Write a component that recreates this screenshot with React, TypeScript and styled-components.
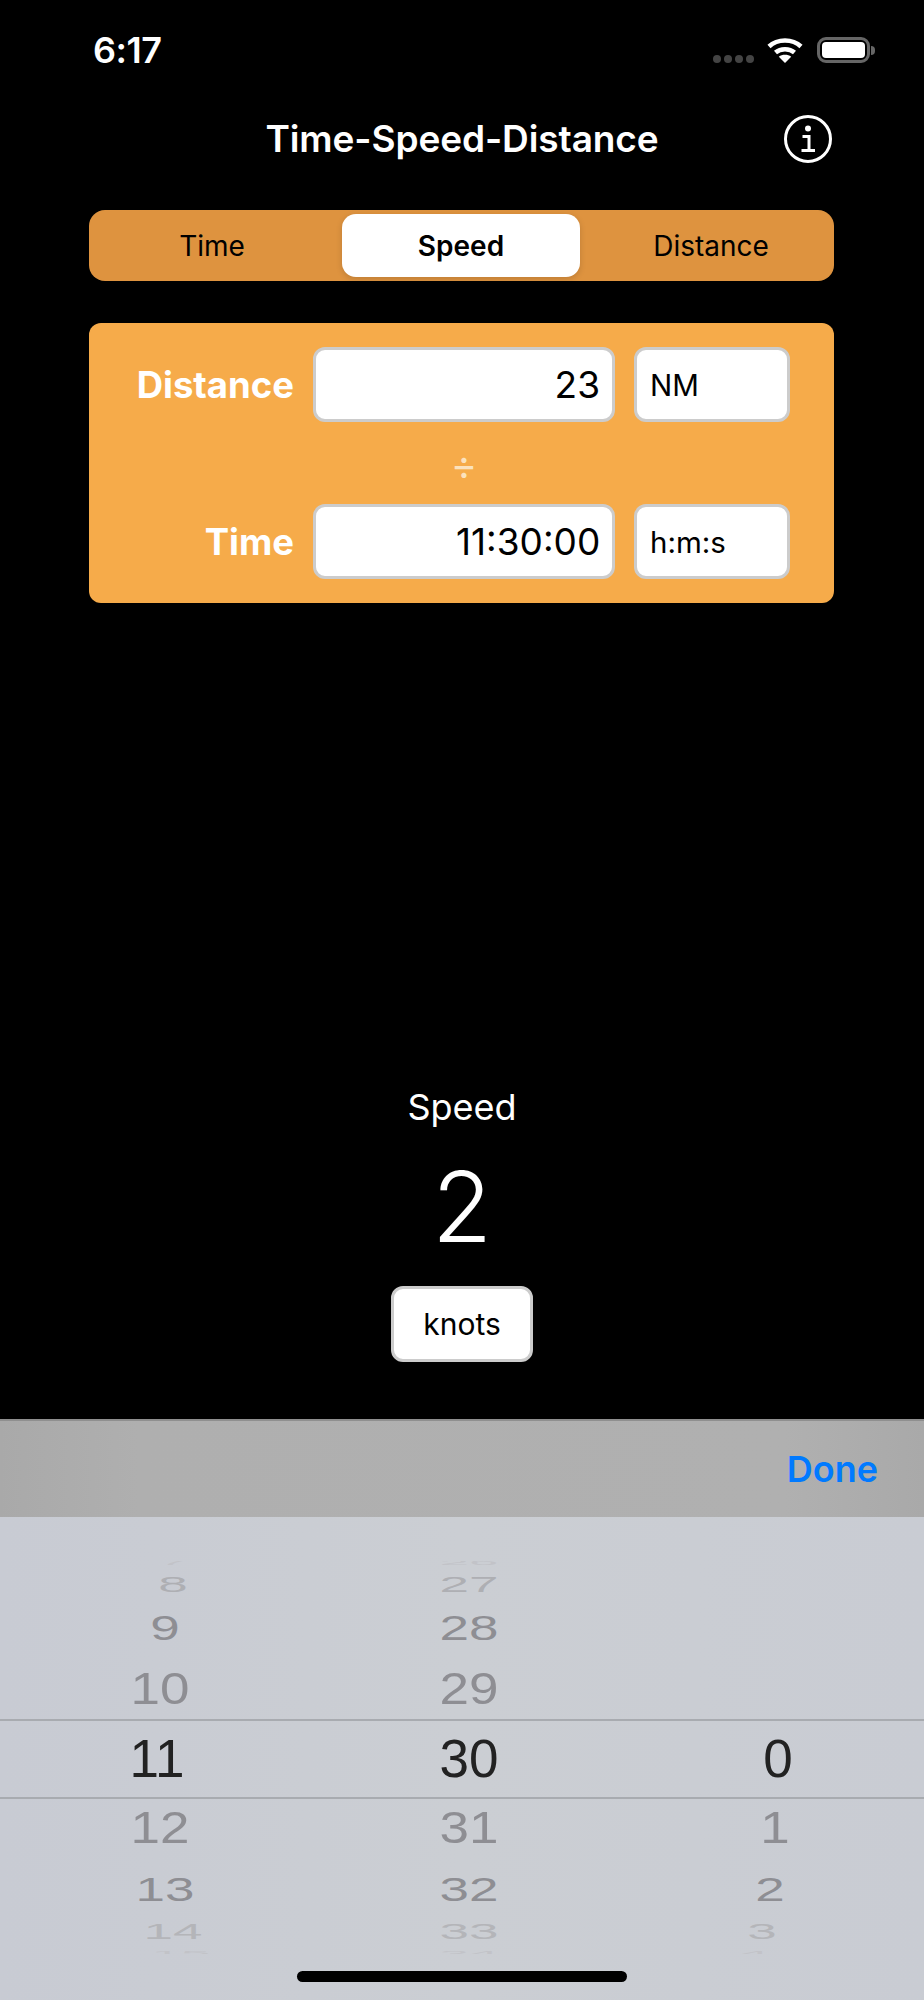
import React from 'react';
import styled, { createGlobalStyle } from 'styled-components';

const GlobalStyle = createGlobalStyle`
  body {
    margin: 0;
    background: #000;
    font-family: Inter, "Liberation Sans", sans-serif;
  }
`;

interface IWheelRow {
  height: number;
  scale: number;
  shift: number;
  color: string;
}

const wheelRows: IWheelRow[] = [
  { height: 20, scale: 0.13, shift: 16, color: '#c2c3c8' },
  { height: 24, scale: 0.4, shift: 16, color: '#aeafb3' },
  { height: 62, scale: 0.66, shift: 8, color: '#8e8e93' },
  { height: 60, scale: 0.84, shift: 3, color: '#8e8e93' },
  { height: 80, scale: 1, shift: 0, color: '#222' },
  { height: 58, scale: 0.84, shift: 3, color: '#8e8e93' },
  { height: 64, scale: 0.64, shift: 8, color: '#8e8e93' },
  { height: 22, scale: 0.4, shift: 16, color: '#b4b5b9' },
  { height: 20, scale: 0.14, shift: 24, color: '#c2c3c8' },
];

const hours = ['7', '8', '9', '10', '11', '12', '13', '14', '15'];
const minutes = ['26', '27', '28', '29', '30', '31', '32', '33', '34'];
const seconds = ['', '', '', '', '0', '1', '2', '3', '4'];

const WifiIcon = () => (
  <svg width="36" height="26" viewBox="0 0 36 26" fill="none">
    <path d="M2 9.500C10.500 1.500 25.500 1.500 34 9.500" stroke="#fff" strokeWidth="4.500" />
    <path d="M8.500 15.500C13.500 11 22.500 11 27.500 15.500" stroke="#fff" strokeWidth="4.500" />
    <path d="M18 26L11.800 19.800C15.200 17.200 20.800 17.200 24.200 19.800Z" fill="#fff" />
  </svg>
);

const InfoIcon = () => (
  <svg width="48" height="48" viewBox="0 0 48 48" fill="none">
    <circle cx="24" cy="24" r="22.500" stroke="#fff" strokeWidth="3" />
    <circle cx="24" cy="13.500" r="3" fill="#fff" />
    <path d="M18.500 21.500H25V35M17.500 35.500H31" stroke="#fff" strokeWidth="3" />
  </svg>
);

const Wheel = ({ values, direction }: { values: string[]; direction: number }) => (
  <WheelColumn>
    {wheelRows.map((row, i) => (
      <WheelCell key={i} $height={row.height}>
        <WheelValue $scale={row.scale} $shift={row.shift * direction} $color={row.color}>
          {values[i]}
        </WheelValue>
      </WheelCell>
    ))}
  </WheelColumn>
);

const App = () => {
  return (
    <Screen>
      <GlobalStyle />
      <StatusBar>
        <Clock>6:17</Clock>
        <StatusIcons>
          <SignalDots>
            <i /><i /><i /><i />
          </SignalDots>
          <WifiIcon />
          <Battery>
            <BatteryLevel />
          </Battery>
        </StatusIcons>
      </StatusBar>

      <NavBar>
        <Title>Time-Speed-Distance</Title>
        <InfoButton>
          <InfoIcon />
        </InfoButton>
      </NavBar>

      <Segments>
        <Segment>Time</Segment>
        <Segment $active>Speed</Segment>
        <Segment>Distance</Segment>
      </Segments>

      <InputPanel>
        <FieldLabel>Distance</FieldLabel>
        <ValueBox>
          <ValueText>23</ValueText>
        </ValueBox>
        <UnitBox>NM</UnitBox>
        <Divide>÷</Divide>
        <FieldLabel>Time</FieldLabel>
        <ValueBox>
          <ValueText $clipped>11:30:00</ValueText>
        </ValueBox>
        <UnitBox>h:m:s</UnitBox>
      </InputPanel>

      <Result>
        <ResultLabel>Speed</ResultLabel>
        <ResultValue>2</ResultValue>
        <ResultUnit>knots</ResultUnit>
      </Result>

      <Toolbar>
        <DoneButton>Done</DoneButton>
      </Toolbar>
      <Picker>
        <SelectionBand />
        <Wheels>
          <Wheel values={hours} direction={1} />
          <Wheel values={minutes} direction={0} />
          <Wheel values={seconds} direction={-1} />
        </Wheels>
        <HomeIndicator />
      </Picker>
    </Screen>
  );
};

const Screen = styled.div`
  width: 924px;
  height: 2000px;
  background: #000;
  display: flex;
  flex-direction: column;
  overflow: hidden;
`;

const StatusBar = styled.div`
  height: 100px;
  padding: 30px 54px 0 93px;
  box-sizing: border-box;
  display: flex;
  justify-content: space-between;
  align-items: flex-start;
`;

const Clock = styled.div`
  color: #fff;
  font-size: 36px;
  font-weight: 600;
  line-height: 40px;
  letter-spacing: -0.5px;
`;

const StatusIcons = styled.div`
  display: flex;
  align-items: flex-end;
  gap: 14px;
  padding-top: 7px;
`;

const SignalDots = styled.div`
  display: flex;
  gap: 3px;
  height: 8px;
  margin-right: -1px;

  i {
    display: block;
    width: 8px;
    height: 8px;
    border-radius: 50%;
    background: #444;
  }
`;

const Battery = styled.div`
  position: relative;
  width: 53px;
  height: 26px;
  box-sizing: border-box;
  border: 3px solid #666;
  border-radius: 9px;
  padding: 2px;

  &::after {
    content: '';
    position: absolute;
    left: 51px;
    top: 6px;
    width: 4px;
    height: 9px;
    border-radius: 0 4px 4px 0;
    background: #666;
  }
`;

const BatteryLevel = styled.div`
  height: 100%;
  border-radius: 4px;
  background: #fff;
`;

const NavBar = styled.div`
  position: relative;
  height: 110px;
  display: flex;
  justify-content: center;
`;

const Title = styled.div`
  color: #fff;
  font-size: 37px;
  font-weight: 600;
  line-height: 78px;
  letter-spacing: -0.1px;
`;

const InfoButton = styled.div`
  position: absolute;
  left: 784px;
  top: 15px;
  height: 48px;
`;

const Segments = styled.div`
  width: 745px;
  height: 71px;
  margin-left: 89px;
  padding: 4px 4px 4px 5px;
  box-sizing: border-box;
  border-radius: 16px;
  background: #de933f;
  display: grid;
  grid-template-columns: 236px 238px 1fr;
  column-gap: 12px;
`;

const Segment = styled.div<{ $active?: boolean }>`
  display: flex;
  align-items: center;
  justify-content: center;
  color: #000;
  font-size: 28px;
  font-weight: ${(p) => (p.$active ? 600 : 400)};
  border-radius: 14px;
  background: ${(p) => (p.$active ? '#fff' : 'transparent')};
  box-shadow: ${(p) => (p.$active ? '0 2px 6px rgba(0, 0, 0, 0.15)' : 'none')};
`;

const InputPanel = styled.div`
  width: 745px;
  height: 280px;
  margin: 42px 0 0 89px;
  padding: 24px 0;
  box-sizing: border-box;
  border-radius: 12px;
  background: #f6ab4a;
  display: grid;
  grid-template-columns: 205px 302px 156px;
  grid-template-rows: 75px 82px 75px;
  column-gap: 19px;
`;

const FieldLabel = styled.div`
  grid-column: 1;
  color: #fff;
  font-size: 36.500px;
  font-weight: 700;
  display: flex;
  align-items: center;
  justify-content: flex-end;
`;

const ValueBox = styled.div`
  border: 3px solid #ccc;
  border-radius: 12px;
  background: #fff;
  display: flex;
  justify-content: flex-end;
  align-items: center;
  padding: 0 12px;
  overflow: hidden;
`;

const ValueText = styled.div<{ $clipped?: boolean }>`
  color: #000;
  font-size: 37px;
  white-space: nowrap;
  ${(p) => p.$clipped && `
    width: 144px;
    flex: none;
    overflow: hidden;
  `}
`;

const UnitBox = styled.div`
  border: 3px solid #ccc;
  border-radius: 12px;
  background: #fff;
  color: #000;
  font-size: 29.500px;
  display: flex;
  align-items: center;
  padding-left: 13px;
`;

const Divide = styled.div`
  grid-column: 2;
  color: #fbe2bd;
  font-size: 40px;
  text-align: center;
  line-height: 86px;
`;

const Result = styled.div`
  display: flex;
  flex-direction: column;
  align-items: center;
  margin-top: 482px;
`;

const ResultLabel = styled.div`
  color: #fff;
  font-size: 36px;
  line-height: 44px;
`;

const ResultValue = styled.div`
  color: #fff;
  font-size: 98px;
  font-weight: 300;
  line-height: 116px;
  margin-top: 20px;
`;

const ResultUnit = styled.div`
  width: 142px;
  height: 76px;
  margin-top: 21px;
  box-sizing: border-box;
  border: 3px solid #ccc;
  border-radius: 12px;
  background: #fff;
  color: #000;
  font-size: 30px;
  display: flex;
  align-items: center;
  justify-content: center;
`;

const Toolbar = styled.div`
  margin-top: auto;
  height: 98px;
  padding: 26px 46px 0 0;
  box-sizing: border-box;
  border-top: 2px solid #8f8f8f;
  background: linear-gradient(90deg, #a9a9a9 0, #afafaf 15%, #b0b0b0 85%, #a9a9a9 100%);
  display: flex;
  justify-content: flex-end;
`;

const DoneButton = styled.div`
  color: #007aff;
  font-size: 36px;
  font-weight: 600;
  line-height: 44px;
`;

const Picker = styled.div`
  position: relative;
  height: 483px;
  background: linear-gradient(90deg, #c8cbd3 0, #cbced3 50%, #c9ccd3 100%);
`;

const SelectionBand = styled.div`
  position: absolute;
  left: 0;
  right: 0;
  top: 202px;
  height: 76px;
  border-top: 2px solid #a8abb0;
  border-bottom: 2px solid #a8abb0;
`;

const Wheels = styled.div`
  position: relative;
  height: 393px;
  margin-top: 44px;
  overflow: hidden;
  display: grid;
  grid-template-columns: 314px 310px 308px;
`;

const WheelColumn = styled.div`
  display: flex;
  flex-direction: column;
  margin-top: -8px;
`;

const WheelCell = styled.div<{ $height: number }>`
  height: ${(p) => p.$height}px;
  display: flex;
  align-items: center;
  justify-content: center;
`;

const WheelValue = styled.div<{ $scale: number; $shift: number; $color: string }>`
  color: ${(p) => p.$color};
  font-family: "Liberation Sans", sans-serif;
  font-size: 53px;
  line-height: 52px;
  transform: translateX(${(p) => p.$shift}px) scaleY(${(p) => p.$scale});
`;

const HomeIndicator = styled.div`
  position: absolute;
  left: 297px;
  top: 454px;
  width: 330px;
  height: 11px;
  border-radius: 6px;
  background: #000;
`;

export default App;
